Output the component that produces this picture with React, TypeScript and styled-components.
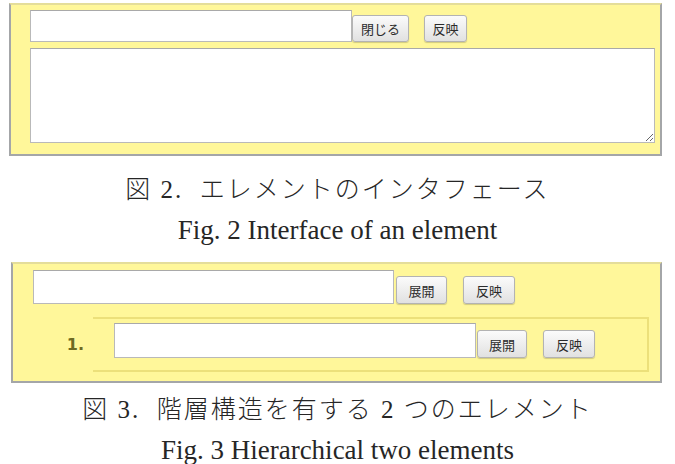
import React from 'react';
import styled, { createGlobalStyle } from 'styled-components';

const GlobalStyle = createGlobalStyle`
  html, body {
    margin: 0;
    padding: 0;
    background: #ffffff;
  }

  body {
    font-family: 'Noto Sans CJK JP', 'Noto Sans', sans-serif;
  }
`;

const Page = styled.div`
  width: 675px;
  height: 464px;
  padding-top: 3px;
  box-sizing: border-box;
  overflow: hidden;
`;

const Panel = styled.section<{ $offset: number }>`
  margin: 0 13px 0 ${({ $offset }) => $offset}px;
  display: flex;
  flex-direction: column;
  background: #fff79a;
  border: 2px solid #a4a6a8;
  border-top-color: #e4dd9a;
  box-sizing: border-box;
`;

const EditorPanel = styled(Panel)`
  padding: 5px 5px 11px 19px;
`;

const TreePanel = styled(Panel)`
  padding: 6px 11px 9px 20px;
`;

const Row = styled.div`
  display: flex;
  align-items: flex-end;
`;

const TextInput = styled.input<{ $w: number; $h: number }>`
  width: ${({ $w }) => $w}px;
  height: ${({ $h }) => $h}px;
  margin: 0;
  padding: 0 4px;
  box-sizing: border-box;
  background: #ffffff;
  border: 1px solid #b9b9b9;
  border-top-color: #a9a9a9;
  outline: none;
  font-size: 14px;
`;

const Button = styled.button<{ $w: number; $h?: number; $gap?: number }>`
  width: ${({ $w }) => $w}px;
  height: ${({ $h }) => $h ?? 27}px;
  margin: 0 0 0 ${({ $gap }) => $gap ?? 0}px;
  padding: 0;
  box-sizing: border-box;
  font-family: 'Noto Sans CJK JP', sans-serif;
  font-size: 13px;
  line-height: 1;
  color: #2b2b2b;
  background: linear-gradient(#fbfbfb, #e1e1e1);
  border: 1px solid #b3b3b3;
  border-radius: 3px;
  box-shadow: 0 1px 1px rgba(0, 0, 0, 0.18);
`;

const Memo = styled.textarea`
  display: block;
  margin: 6px 0 0;
  width: 625px;
  height: 95px;
  padding: 2px 4px;
  box-sizing: border-box;
  background: #ffffff;
  border: 1px solid #b9b9b9;
  border-top-color: #a9a9a9;
  outline: none;
  resize: both;
`;

const Caption = styled.figcaption<{ $top: number; $bottom?: number }>`
  margin: ${({ $top }) => $top}px 0 ${({ $bottom }) => $bottom ?? 0}px;
  text-align: center;
  color: #262626;
`;

const CaptionJa = styled.div`
  height: 30px;
  line-height: 30px;
  font-family: 'Liberation Serif', 'Noto Sans CJK JP', serif;
  font-size: 25px;
  font-weight: 300;
  letter-spacing: 2px;
  white-space: nowrap;
`;

const CaptionEn = styled.div`
  margin-top: 7px;
  height: 36px;
  line-height: 36px;
  font-family: 'Liberation Serif', 'Times New Roman', serif;
  font-size: 27px;
  white-space: nowrap;
`;

const ChildList = styled.ol`
  margin: 13px 0 0;
  padding: 0;
  list-style: none;
`;

const ChildItem = styled.li`
  display: flex;
  align-items: center;
`;

const Index = styled.span`
  width: 60px;
  padding-right: 9px;
  box-sizing: border-box;
  text-align: right;
  font-family: 'DejaVu Sans', Verdana, sans-serif;
  font-size: 16px;
  font-weight: bold;
  color: #6e6a22;
`;

const ChildBox = styled.div`
  flex: 1;
  padding: 4px 0 12px 21px;
  border: 2px solid #ece07a;
  border-left: none;
`;

export default function App() {
  return (
    <>
      <GlobalStyle />
      <Page>
        <EditorPanel $offset={9}>
          <Row>
            <TextInput $w={322} $h={32} />
            <Button $w={57}>閉じる</Button>
            <Button $w={43} $gap={15}>反映</Button>
          </Row>
          <Memo />
        </EditorPanel>

        <Caption $top={19} $bottom={14}>
          <CaptionJa>図 2.&nbsp; エレメントのインタフェース</CaptionJa>
          <CaptionEn>Fig. 2 Interface of an element</CaptionEn>
        </Caption>

        <TreePanel $offset={11}>
          <Row>
            <TextInput $w={361} $h={34} />
            <Button $w={51} $h={28} $gap={2}>展開</Button>
            <Button $w={52} $h={28} $gap={16}>反映</Button>
          </Row>
          <ChildList>
            <ChildItem>
              <Index>1.</Index>
              <ChildBox>
                <Row>
                  <TextInput $w={362} $h={35} />
                  <Button $w={50} $h={28} $gap={1}>展開</Button>
                  <Button $w={52} $h={28} $gap={16}>反映</Button>
                </Row>
              </ChildBox>
            </ChildItem>
          </ChildList>
        </TreePanel>

        <Caption $top={12}>
          <CaptionJa>図 3.&nbsp; 階層構造を有する 2 つのエレメント</CaptionJa>
          <CaptionEn>Fig. 3 Hierarchical two elements</CaptionEn>
        </Caption>
      </Page>
    </>
  );
}
